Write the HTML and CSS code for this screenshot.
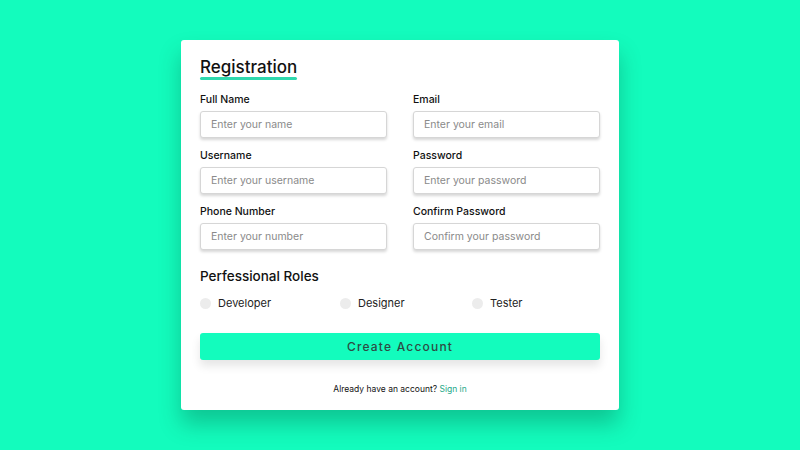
FILE: index.html
```html
<!DOCTYPE html>
<html lang="en">
<head>
<meta charset="utf-8">
<title>Registration</title>
<link rel="stylesheet" href="styles.css">
</head>
<body>
<div class="card">
  <h1 class="title">Registration</h1>
  <form class="form">
    <div class="grid">
      <div class="field">
        <label>Full Name</label>
        <input type="text" placeholder="Enter your name">
      </div>
      <div class="field">
        <label>Email</label>
        <input type="text" placeholder="Enter your email">
      </div>
      <div class="field">
        <label>Username</label>
        <input type="text" placeholder="Enter your username">
      </div>
      <div class="field">
        <label>Password</label>
        <input type="text" placeholder="Enter your password">
      </div>
      <div class="field">
        <label>Phone Number</label>
        <input type="text" placeholder="Enter your number">
      </div>
      <div class="field">
        <label>Confirm Password</label>
        <input type="text" placeholder="Confirm your password">
      </div>
    </div>
    <h2 class="roles-title">Perfessional Roles</h2>
    <div class="roles">
      <label class="role"><span class="dot"></span>Developer</label>
      <label class="role"><span class="dot"></span>Designer</label>
      <label class="role"><span class="dot"></span>Tester</label>
    </div>
    <button type="button" class="btn">Create Account</button>
    <p class="footer">Already have an account? <a href="#">Sign in</a></p>
  </form>
</div>
</body>
</html>
```
FILE: styles.css
```css
* { box-sizing: border-box; }
html, body { margin: 0; padding: 0; }
body {
  width: 800px;
  height: 450px;
  background: #13fcbd;
  font-family: "Inter", "Open Sans", sans-serif;
  display: flex;
  justify-content: center;
  align-items: flex-start;
  padding-top: 40px;
}
.card {
  width: 438px;
  height: 370px;
  background: #fff;
  border-radius: 3px;
  padding: 17px 19px 0;
  box-shadow: 0 14px 22px rgba(0, 60, 40, 0.28);
}
.title {
  display: inline-block;
  margin: 0;
  font-size: 17px;
  font-weight: 500;
  line-height: 18px;
  color: #111;
}
.title::after {
  content: "";
  display: block;
  height: 3px;
  margin-top: 1px;
  border-radius: 2px;
  background: #2fd9ae;
}
.form { margin-top: 12px; }
.grid {
  display: grid;
  grid-template-columns: 187px 187px;
  column-gap: 26px;
  row-gap: 10px;
}
.field { display: flex; flex-direction: column; }
.field label {
  font-size: 10.5px;
  font-weight: 500;
  line-height: 16px;
  color: #111;
}
.field input {
  margin-top: 3px;
  height: 27px;
  border: 1px solid #d6d6d6;
  border-radius: 3px;
  padding: 0 10px;
  font-family: inherit;
  font-size: 10.5px;
  box-shadow: 0 2px 3px rgba(0, 0, 0, 0.16);
  outline: none;
}
.field input::placeholder { color: #8a8a8a; }
.roles-title {
  margin: 16px 0 0;
  font-size: 13.5px;
  font-weight: 500;
  line-height: 20px;
  color: #111;
}
.roles {
  margin-top: 9px;
  display: grid;
  grid-template-columns: 140px 132px auto;
}
.role {
  display: flex;
  align-items: center;
  gap: 7px;
  font-size: 11px;
  line-height: 16px;
  color: #222;
}
.dot {
  width: 11px;
  height: 11px;
  border-radius: 50%;
  background: #ececec;
}
.btn {
  display: block;
  width: 100%;
  height: 27px;
  margin-top: 22px;
  border: none;
  border-radius: 3px;
  background: #13fcbd;
  color: #2e4b44;
  font-family: inherit;
  font-size: 12px;
  font-weight: 500;
  letter-spacing: 1.2px;
  box-shadow: 0 6px 10px rgba(0, 0, 0, 0.1);
}
.footer {
  margin: 23px 0 0;
  text-align: center;
  font-size: 8.5px;
  line-height: 12px;
  color: #111;
}
.footer a { color: #1ea888; text-decoration: none; }
```
